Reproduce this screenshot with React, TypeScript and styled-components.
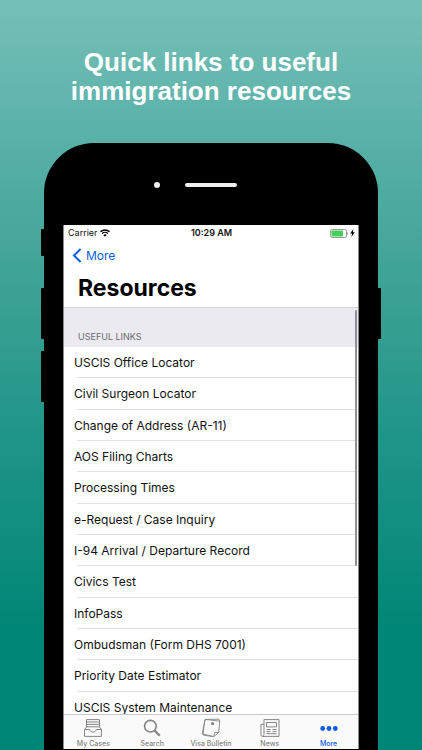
import React from "react";
import styled, { createGlobalStyle } from "styled-components";

const GlobalStyle = createGlobalStyle`
  *, *::before, *::after { box-sizing: border-box; }
  body { margin: 0; font-family: Inter, "Liberation Sans", sans-serif; color: #111; }
`;

const Page = styled.div`
  height: 100vh;
  display: flex;
  flex-direction: column;
  overflow: hidden;
  background: linear-gradient(180deg, #76c0b8 0%, #5bb2a9 17%, #42a498 35%, #1f9588 58%, #008676 84%, #008676 100%);
`;

const Headline = styled.h1`
  margin: 0;
  padding: 48px 24px 37px;
  text-align: center;
  color: #fff;
  font: 700 26px/29px "Liberation Sans", Arial, sans-serif;
`;

const Phone = styled.div`
  position: relative;
  flex: 1;
  min-height: 0;
  display: flex;
  flex-direction: column;
  margin: 0 44px;
  padding: 0 19px 1px;
  background: #000;
  border-radius: 50px 50px 0 0;
`;

const SideButton = styled.span<{ $side: "left" | "right"; $top: number; $length: number }>`
  position: absolute;
  ${(p) => p.$side}: -3px;
  top: ${(p) => p.$top}px;
  width: 5px;
  height: ${(p) => p.$length}px;
  background: #000;
  border-radius: 1px;
`;

const Bezel = styled.div`
  height: 82px;
  flex: none;
  display: grid;
  grid-template-columns: 1fr 54px 1fr;
  align-items: center;
  padding-top: 2px;
`;

const Camera = styled.span`
  justify-self: end;
  width: 6px;
  height: 6px;
  margin-right: 24px;
  border-radius: 50%;
  background: #efefef;
`;

const Speaker = styled.span`
  height: 4px;
  margin: 0 1px;
  border-radius: 2px;
  background: #efefef;
`;

const Screen = styled.div`
  flex: 1;
  min-height: 0;
  display: flex;
  flex-direction: column;
  background: #fff;
  border: solid #8c8c8c;
  border-width: 0 1px;
`;

const StatusBar = styled.div`
  height: 16px;
  flex: none;
  display: grid;
  grid-template-columns: 1fr auto 1fr;
  align-items: center;
  padding: 0 3px 0 4px;
  font-size: 9px;
  line-height: 16px;
`;

const StatusGroup = styled.span<{ $end?: boolean }>`
  display: flex;
  align-items: center;
  gap: 2px;
  justify-content: ${(p) => (p.$end ? "flex-end" : "flex-start")};
`;

const Clock = styled.time`
  font-weight: 600;
`;

const NavBar = styled.nav`
  height: 29px;
  flex: none;
  display: flex;
  align-items: center;
  padding-left: 8px;
`;

const BackButton = styled.button`
  display: flex;
  align-items: center;
  gap: 4px;
  padding: 0;
  border: 0;
  background: none;
  color: #0a60ea;
  font: 400 12px/20px Inter, sans-serif;
`;

const ScreenTitle = styled.h2`
  margin: 0;
  flex: none;
  padding: 4px 14px;
  color: #000;
  font-size: 23px;
  line-height: 29px;
  font-weight: 700;
`;

const Content = styled.main`
  position: relative;
  flex: 1;
  min-height: 0;
  overflow: hidden;
`;

const SectionTitle = styled.h3`
  margin: 0;
  height: 40px;
  padding: 19px 14px 0;
  border-top: 1px solid #d3d3d8;
  background: #ebeaf1;
  color: #6c6c71;
  font-size: 9px;
  line-height: 20px;
  font-weight: 400;
`;

const LinkList = styled.ul`
  margin: 0;
  padding: 0;
  height: 376px;
  display: grid;
  grid-auto-rows: 1fr;
  list-style: none;
`;

const LinkRow = styled.li`
  display: flex;
  margin-left: 13px;
  border-bottom: 1px solid #e2e2e4;
`;

const RowLink = styled.a`
  flex: 1;
  display: flex;
  align-items: center;
  margin-left: -3px;
  padding-top: 1px;
  color: #111;
  font-size: 12px;
  text-decoration: none;
`;

const ScrollThumb = styled.span`
  position: absolute;
  top: 3px;
  right: 1px;
  width: 2px;
  height: 256px;
  border-radius: 1px;
  background: #8f8f95;
`;

const TabBar = styled.nav`
  flex: none;
  height: 35px;
  display: grid;
  grid-template-columns: repeat(5, 1fr);
  border-top: 1px solid #c9c9cb;
  background: #fafafa;
`;

const Tab = styled.button<{ $active?: boolean }>`
  display: flex;
  flex-direction: column;
  align-items: center;
  gap: 1px;
  padding: 3px 0 0;
  border: 0;
  background: none;
  color: ${(p) => (p.$active ? "#0a5be8" : "#858585")};
  font: 500 7px/10px Inter, sans-serif;
  white-space: nowrap;

  svg { display: block; flex: none; }
`;

const WifiIcon = () => (
  <svg width="10" height="8" viewBox="0 0 20 16" fill="none" stroke="#000" strokeWidth="2.8" aria-hidden="true">
    <path d="M1 5.6a13 13 0 0 1 18 0M4.3 9a8.2 8.2 0 0 1 11.4 0" />
    <path d="M10 15.5l-3.2-3.7a4.8 4.8 0 0 1 6.4 0z" fill="#000" stroke="none" />
  </svg>
);

const BatteryIcon = () => (
  <svg width="18" height="9" viewBox="0 0 18 9" aria-hidden="true">
    <rect x=".5" y=".5" width="16" height="8" rx="1.8" fill="#fff" stroke="#8c8c8c" strokeWidth=".9" />
    <rect x="1.5" y="1.5" width="11.5" height="6" rx=".7" fill="#43d158" />
    <path d="M17.2 3.1c1 .4 1 2.4 0 2.8z" fill="#8c8c8c" />
  </svg>
);

const BoltIcon = () => (
  <svg width="5" height="8" viewBox="0 0 5 8" aria-hidden="true">
    <path d="M3.4 0L.2 4.5h1.9L1.4 8 4.8 3.3H2.9z" fill="#000" />
  </svg>
);

const BackIcon = () => (
  <svg width="10" height="15" viewBox="0 0 10 15" fill="none" stroke="currentColor" strokeWidth="2" aria-hidden="true">
    <path d="M8.6 1L2 7.5 8.6 14" />
  </svg>
);

const iconProps = {
  width: 20,
  height: 20,
  viewBox: "0 0 20 20",
  fill: "none",
  stroke: "currentColor",
  "aria-hidden": true,
} as const;

const CasesIcon = () => (
  <svg {...iconProps}>
    <path d="M3.5 9.5V1.6h13v7.9M3.5 4h13M3.5 6.4h13M3.5 8.8h13" />
    <path d="M3.2 9.3L1.6 11.5v6.9h16.8v-6.9l-1.6-2.2M1.6 11.5h5.2c.3 1.7 1.4 2.6 3.2 2.6s2.9-.9 3.2-2.6h5.2" />
  </svg>
);

const SearchIcon = () => (
  <svg {...iconProps}>
    <circle cx="8.4" cy="8.2" r="5.8" strokeWidth="1.6" />
    <path d="M12.6 12.6l5.2 5.2" strokeWidth="2.2" />
  </svg>
);

const BulletinIcon = () => (
  <svg {...iconProps} strokeLinejoin="round">
    <path d="M3.4 4.5L2 17l9.5 1.6" strokeWidth=".9" />
    <path d="M4.2 1.4L1.2 15.8l11.6 2.8 5-4.2.9-11.2z" strokeWidth=".9" />
    <path d="M3.6 4.2L4.2 1.4l13.8-.2.7 2" strokeWidth=".9" />
    <path d="M17.8 14.4l-4.3.2-.7 4" strokeWidth=".9" />
    <circle cx="11.6" cy="5.6" r="1.6" fill="currentColor" stroke="none" />
  </svg>
);

const NewsIcon = () => (
  <svg {...iconProps}>
    <path d="M4 1.6h15v16.8H2.4A1.6 1.6 0 0 1 1 16.8V6.4h3V16c0 1.3-.6 2-1.5 2.2M4 6.4V1.6" />
    <path d="M6.5 4.5h10v4.4h-10zM6.5 11.5h4M12.5 11.5h4M6.5 13.6h4M12.5 13.6h4M6.5 15.7h10" />
  </svg>
);

const MoreIcon = () => (
  <svg {...iconProps}>
    <g fill="currentColor" stroke="none">
      <circle cx="3.7" cy="10.5" r="2.4" />
      <circle cx="10" cy="10.5" r="2.4" />
      <circle cx="16.3" cy="10.5" r="2.4" />
    </g>
  </svg>
);

const links = [
  "USCIS Office Locator",
  "Civil Surgeon Locator",
  "Change of Address (AR-11)",
  "AOS Filing Charts",
  "Processing Times",
  "e-Request / Case Inquiry",
  "I-94 Arrival / Departure Record",
  "Civics Test",
  "InfoPass",
  "Ombudsman (Form DHS 7001)",
  "Priority Date Estimator",
  "USCIS System Maintenance",
];

const tabs = [
  { label: "My Cases", Icon: CasesIcon },
  { label: "Search", Icon: SearchIcon },
  { label: "Visa Bulletin", Icon: BulletinIcon },
  { label: "News", Icon: NewsIcon },
  { label: "More", Icon: MoreIcon },
];

export default function App() {
  return (
    <Page>
      <GlobalStyle />
      <Headline>
        Quick links to useful
        <br />
        immigration resources
      </Headline>
      <Phone>
        <SideButton $side="left" $top={86} $length={27} />
        <SideButton $side="left" $top={145} $length={51} />
        <SideButton $side="left" $top={208} $length={51} />
        <SideButton $side="right" $top={145} $length={51} />
        <Bezel>
          <Camera />
          <Speaker />
        </Bezel>
        <Screen>
          <StatusBar>
            <StatusGroup>
              Carrier <WifiIcon />
            </StatusGroup>
            <Clock>10:29 AM</Clock>
            <StatusGroup $end>
              <BatteryIcon />
              <BoltIcon />
            </StatusGroup>
          </StatusBar>
          <NavBar>
            <BackButton type="button">
              <BackIcon />
              More
            </BackButton>
          </NavBar>
          <ScreenTitle>Resources</ScreenTitle>
          <Content>
            <SectionTitle>USEFUL LINKS</SectionTitle>
            <LinkList>
              {links.map((label) => (
                <LinkRow key={label}>
                  <RowLink href="#">{label}</RowLink>
                </LinkRow>
              ))}
            </LinkList>
            <ScrollThumb />
          </Content>
          <TabBar>
            {tabs.map(({ label, Icon }) => (
              <Tab key={label} type="button" $active={label === "More"}>
                <Icon />
                {label}
              </Tab>
            ))}
          </TabBar>
        </Screen>
      </Phone>
    </Page>
  );
}
